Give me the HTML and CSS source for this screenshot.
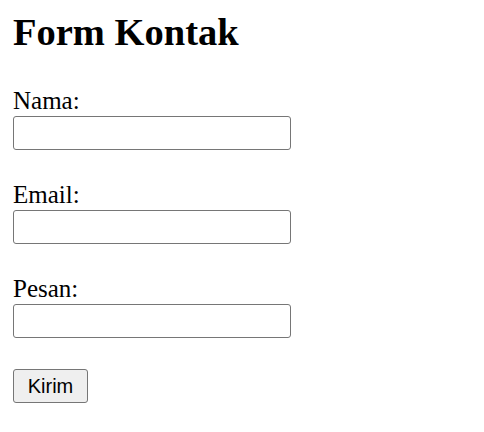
FILE: index.html
```html
<!DOCTYPE html>
<html lang="id">
<head>
<meta charset="utf-8">
<title>Form Kontak</title>
<link rel="stylesheet" href="styles.css">
</head>
<body>
<main class="page">
  <h1 class="title">Form Kontak</h1>
  <form class="form">
    <div class="field">
      <label class="label" for="nama">Nama:</label>
      <input class="input" type="text" id="nama" name="nama">
    </div>
    <div class="field">
      <label class="label" for="email">Email:</label>
      <input class="input" type="email" id="email" name="email">
    </div>
    <div class="field">
      <label class="label" for="pesan">Pesan:</label>
      <input class="input" type="text" id="pesan" name="pesan">
    </div>
    <div class="actions">
      <button class="button" type="submit">Kirim</button>
    </div>
  </form>
</main>
</body>
</html>
```

FILE: styles.css
```css
html, body {
  margin: 0;
  padding: 0;
  background: #ffffff;
}

.page {
  padding: 10px 13px;
  font-family: "Liberation Serif", "Times New Roman", serif;
  color: #000000;
}

.title {
  margin: 0;
  font-size: 38.5px;
  line-height: 44px;
  font-weight: bold;
}

.form {
  display: flex;
  flex-direction: column;
  gap: 31px;
  margin-top: 33px;
}

.field {
  display: flex;
  flex-direction: column;
  align-items: flex-start;
  gap: 1px;
}

.label {
  font-size: 25px;
  line-height: 28px;
}

.input {
  box-sizing: border-box;
  width: 278px;
  height: 34px;
  margin: 0;
  padding: 2px 3px;
  border: 1px solid #767676;
  border-radius: 3px;
  background: #ffffff;
  font-family: "Liberation Sans", Arial, sans-serif;
  font-size: 20px;
}

.actions {
  display: flex;
}

.button {
  box-sizing: border-box;
  width: 75px;
  height: 34px;
  margin: 0;
  padding: 0;
  border: 1px solid #767676;
  border-radius: 3px;
  background: #efefef;
  color: #000000;
  font-family: "Liberation Sans", Arial, sans-serif;
  font-size: 20px;
}
```
